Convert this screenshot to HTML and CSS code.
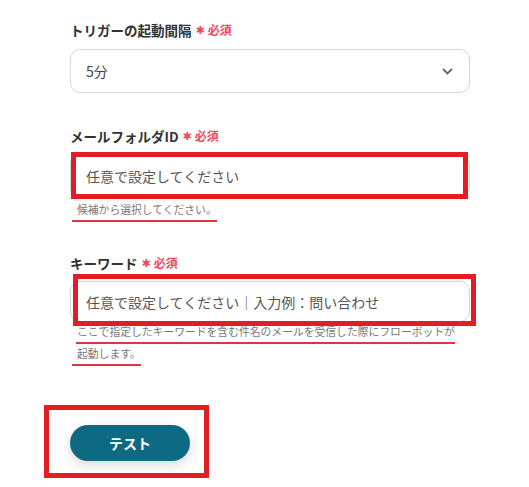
FILE: index.html
```
<!DOCTYPE html>
<html lang="ja">
<head>
<meta charset="utf-8">
<link rel="stylesheet" href="styles.css">
</head>
<body>
<div class="form">
  <div class="label">トリガーの起動間隔<span class="req"><span class="star">✱</span>必須</span></div>
  <div class="select">
    <span>5分</span>
    <svg class="chev" width="11" height="7" viewBox="0 0 11 7"><polyline points="1,1 5.5,5.5 10,1" fill="none" stroke="#666" stroke-width="1.8"/></svg>
  </div>

  <div class="label label2">メールフォルダID<span class="req"><span class="star">✱</span>必須</span></div>
  <div class="input input2">
    <span>任意で設定してください</span>
    <div class="mark mark1"></div>
  </div>
  <div class="help help1"><span class="ul">候補から選択してください。</span></div>

  <div class="label label3">キーワード<span class="req"><span class="star">✱</span>必須</span></div>
  <div class="input input3">
    <span>任意で設定してください｜入力例：問い合わせ</span>
    <div class="mark mark2"></div>
  </div>
  <div class="help help2">
    <div><span class="ul ul-a">ここで指定したキーワードを含む件名のメールを受信した際にフローボットが</span></div>
    <div class="line2"><span class="ul ul-b">起動します。</span></div>
  </div>

  <div class="btn-wrap">
    <button class="btn">テスト</button>
    <div class="mark mark3"></div>
  </div>
</div>
</body>
</html>
```

FILE: styles.css
```
html, body {
  min-height: 100%;
}
body {
  margin: 0;
  background: #fff;
  font-family: "Noto Sans CJK JP", "Noto Sans", sans-serif;
}
.form {
  padding: 20px 0 40px 70px;
  width: 400px;
}
.label {
  font-size: 13.5px;
  font-weight: 700;
  color: #333;
  line-height: 20px;
  display: flex;
  align-items: center;
  gap: 4px;
}
.req {
  display: flex;
  align-items: center;
  gap: 3px;
  color: #ec4a60;
  font-size: 12px;
  font-weight: 700;
}
.star {
  font-family: "DejaVu Sans", sans-serif;
  font-size: 11px;
  font-weight: 400;
  line-height: 1;
  margin-top: 1px;
}
.select {
  margin-top: 9px;
  height: 44px;
  box-sizing: border-box;
  border: 1px solid #d3d7de;
  border-radius: 10px;
  display: flex;
  align-items: center;
  justify-content: space-between;
  padding: 0 16px 0 15px;
  font-size: 14px;
  color: #444;
}
.label2 { margin-top: 33px; }
.input {
  position: relative;
  box-sizing: border-box;
  border: 1px solid #d3d7de;
  border-radius: 10px;
  display: flex;
  align-items: center;
  padding-left: 15px;
  font-size: 14px;
  color: #555;
}
.input2 { margin-top: 8px; height: 44px; }
.input3 { margin-top: 8px; height: 41px; }
.mark {
  position: absolute;
  border: 5px solid #e41c23;
  pointer-events: none;
}
.mark1 { left: 0; right: 1px; top: -3px; bottom: -2px; }
.mark2 { left: 2px; right: -7px; top: -8px; bottom: -5px; }
.help {
  margin-left: 2px;
  font-size: 10.8px;
  color: #777;
  line-height: 14px;
}
.help1 { margin-top: 4px; }
.ul {
  display: inline-block;
  padding-left: 5px;
  padding-bottom: 4px;
  border-bottom: 2px solid #e5323c;
}
.ul-a { margin-left: 4px; padding-left: 1px; }
.help2 { margin-top: 2px; }
.line2 { margin-top: 2px; }
.label3 { margin-top: 31px; }
.btn-wrap {
  position: relative;
  width: 120px;
  margin-top: 59px;
}
.btn {
  display: block;
  width: 120px;
  height: 36px;
  border: none;
  border-radius: 18px;
  background: #0d6a82;
  color: #fff;
  font-family: "Noto Sans CJK JP", "Noto Sans", sans-serif;
  font-size: 14px;
  font-weight: 700;
  box-shadow: 0 4px 12px rgba(0, 0, 0, 0.15);
}
.mark3 { left: -26px; right: -19px; top: -20px; bottom: -17px; }
```
